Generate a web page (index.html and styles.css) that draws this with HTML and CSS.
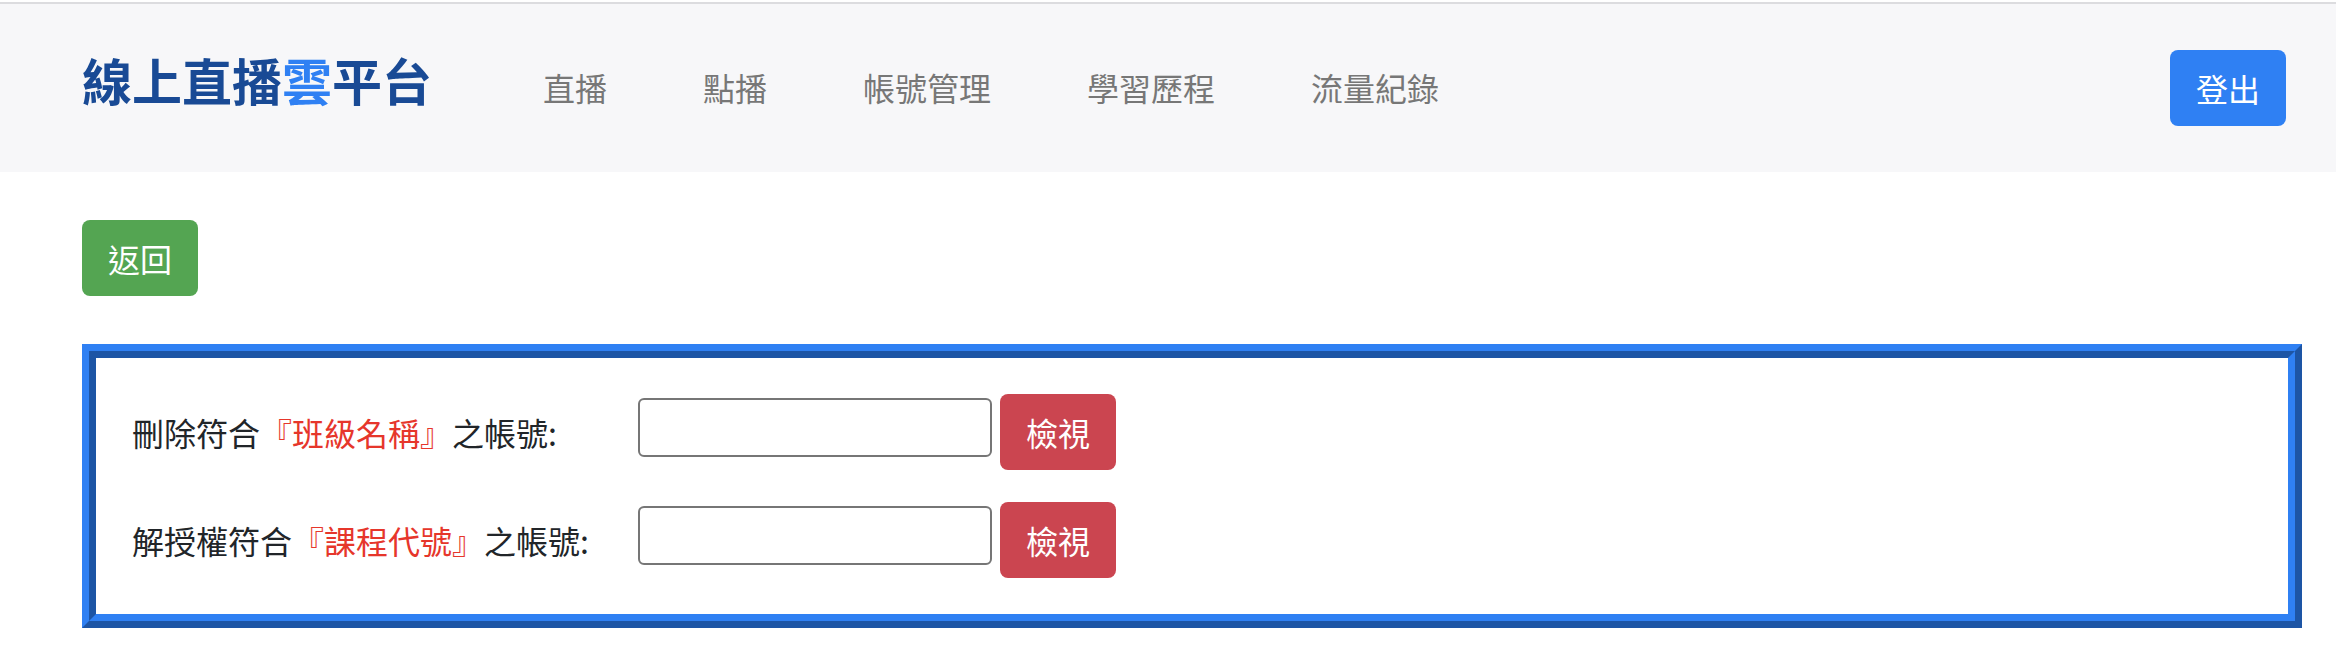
FILE: index.html
```html
<!DOCTYPE html>
<html lang="zh-Hant">
<head>
    <meta charset="UTF-8">
    <meta name="viewport" content="width=device-width, initial-scale=1.0">
    <title>線上直播雲平台</title>
    <link rel="stylesheet" href="styles.css">
</head>
<body>
    <header class="navbar">
        <div class="nav-left">
            <a class="brand" href="#">線上直播<span class="brand-accent">雲</span>平台</a>
            <nav class="nav-links">
                <a href="#">直播</a>
                <a href="#">點播</a>
                <a href="#">帳號管理</a>
                <a href="#">學習歷程</a>
                <a href="#">流量紀錄</a>
            </nav>
        </div>
        <button class="btn btn-logout" type="button">登出</button>
    </header>

    <main class="page">
        <button class="btn btn-back" type="button">返回</button>

        <section class="account-box">
            <div class="account-box-inner">
                <form class="account-row">
                    <label for="className">刪除符合<span class="hl">『班級名稱』</span>之帳號:</label>
                    <input type="text" id="className" name="className">
                    <button class="btn btn-view" type="submit">檢視</button>
                </form>
                <form class="account-row">
                    <label for="courseCode">解授權符合<span class="hl">『課程代號』</span>之帳號:</label>
                    <input type="text" id="courseCode" name="courseCode">
                    <button class="btn btn-view" type="submit">檢視</button>
                </form>
            </div>
        </section>
    </main>
</body>
</html>
```

FILE: styles.css
```css
body {
    margin: 0;
    background-color: #fff;
    color: #212529;
    font-family: "Noto Sans CJK TC", "Noto Sans", sans-serif;
}
a {
    text-decoration: none;
}
.navbar {
    display: flex;
    align-items: center;
    height: 168px;
    margin-top: 2px;
    padding: 0 50px 0 82px;
    border-top: 2px solid #dcdcdf;
    background-color: #f7f7f9;
}
.nav-left {
    display: flex;
    align-items: baseline;
    margin-top: -12px;
}
.brand {
    font-size: 50px;
    font-weight: bold;
    line-height: 1;
    color: #194a95;
}
.brand-accent {
    color: #2f80f3;
}
.nav-links {
    display: flex;
    margin-left: 63px;
}
.nav-links a {
    padding: 0 48px;
    font-size: 32px;
    color: #777;
}
.btn {
    font-family: inherit;
    font-size: 32px;
    line-height: 48px;
    padding: 12px 24px;
    border: 2px solid transparent;
    border-radius: 8px;
    color: #fff;
    cursor: pointer;
}
.btn-logout {
    margin-left: auto;
    background-color: #2f80f3;
}
.page {
    padding: 48px 34px 0 82px;
}
.btn-back {
    display: block;
    background-color: #54a552;
}
.account-box {
    margin-top: 48px;
    border: 7px solid;
    border-color: #2f80f3 #1d55a5 #1d55a5 #2f80f3;
}
.account-box-inner {
    display: flex;
    flex-direction: column;
    gap: 32px;
    padding: 36px;
    border: 7px solid;
    border-color: #1d55a5 #2f80f3 #2f80f3 #1d55a5;
}
.account-row {
    display: flex;
    align-items: center;
    margin: 0;
}
.account-row label {
    width: 506px;
    font-size: 32px;
}
.hl {
    color: #e6362b;
}
.account-row input {
    box-sizing: border-box;
    width: 354px;
    height: 59px;
    margin: 0 8px 9px 0;
    border: 2px solid #767676;
    border-radius: 6px;
    background-color: #fff;
}
.btn-view {
    background-color: #cb4550;
}
```
